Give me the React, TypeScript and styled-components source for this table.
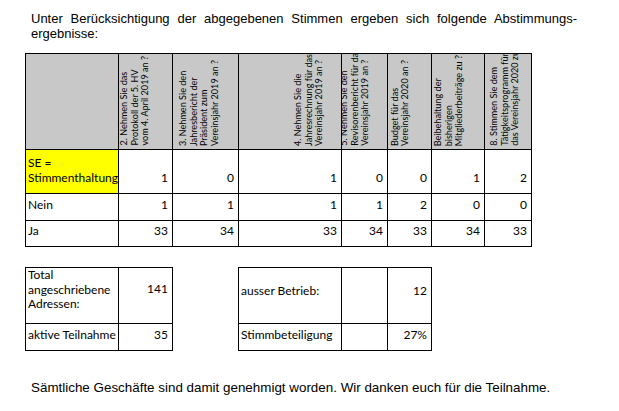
import React from "react";
import styled, { createGlobalStyle } from "styled-components";

const Global = createGlobalStyle`
  html, body { margin: 0; padding: 0; background: #ffffff; }
  body { font-family: Lato, "Open Sans", sans-serif; color: #000; }
`;

const Page = styled.div`
  width: 619px;
  height: 411px;
  box-sizing: border-box;
  padding-top: 11px;
  display: flex;
  flex-direction: column;
`;

const Para = styled.p<{ $top?: number; $size?: number }>`
  margin: ${(p) => p.$top ?? 0}px 0 0 31px;
  width: 546px;
  font-family: "Liberation Sans", Arial, sans-serif;
  font-size: ${(p) => p.$size ?? 13}px;
  line-height: 15px;
  text-align: justify;
`;

const Grid = styled.div<{ $cols: string; $rows: string; $left: number; $top: number }>`
  display: grid;
  grid-template-columns: ${(p) => p.$cols};
  grid-template-rows: ${(p) => p.$rows};
  width: fit-content;
  margin: ${(p) => p.$top}px 0 0 ${(p) => p.$left}px;
  border-left: 1px solid #000;
  border-top: 1px solid #000;
`;

const HeadCell = styled.div`
  box-sizing: border-box;
  border-right: 1px solid #000;
  border-bottom: 1px solid #000;
  background: #c8c8c8;
  overflow: hidden;
  display: flex;
  align-items: flex-end;
`;

const Rot = styled.div<{ $pad: number }>`
  writing-mode: vertical-rl;
  transform: rotate(180deg);
  margin-left: ${(p) => p.$pad}px;
  margin-bottom: 3px;
  font-size: 9.1px;
  line-height: 10.7px;
  white-space: nowrap;
  flex-shrink: 0;
`;

const Cell = styled.div<{ $num?: boolean; $hl?: boolean; $pt?: number; $pb?: number }>`
  box-sizing: border-box;
  border-right: 1px solid #000;
  border-bottom: 1px solid #000;
  background: ${(p) => (p.$hl ? "#ffff00" : "#ffffff")};
  display: flex;
  flex-direction: column;
  justify-content: ${(p) => (p.$pt !== undefined ? "flex-start" : "flex-end")};
  padding: ${(p) => p.$pt ?? 0}px ${(p) => (p.$num ? 4 : 0)}px ${(p) => p.$pb ?? 0}px ${(p) => (p.$num ? 0 : 2)}px;
  text-align: ${(p) => (p.$num ? "right" : "left")};
  font-size: 12px;
  line-height: 14.5px;
  white-space: nowrap;
`;

const Summary = styled.div`
  display: flex;
  gap: 65px;
  margin: 20px 0 0 25px;
`;

const cols = [93, 54, 66, 103, 46, 44, 53, 47];
const colStr = cols.map((c) => `${c}px`).join(" ");

const headers: { lines: string[]; pad: number }[] = [
  { lines: [], pad: 0 },
  { lines: ["2. Nehmen Sie das", "Protokoll der 5. HV", "vom 4. April 2019 an ?"], pad: 0 },
  { lines: ["3. Nehmen Sie den", "Jahresbericht der", "Präsident zum", "Vereinsjahr 2019 an ?"], pad: 5 },
  { lines: ["4. Nehmen Sie die", "Jahresrechnung für das", "Vereinsjahr 2019 an ?"], pad: 54 },
  { lines: ["5. Nehmen Sie den", "Revisorenbericht für das", "Vereinsjahr 2019 an ?"], pad: -3 },
  { lines: ["6. Nehmen Sie das", "Budget für das", "Vereinsjahr 2020 an ?"], pad: -9 },
  { lines: ["Beibehaltung der", "bisherigen", "Mitgliederbeiträge zu ?"], pad: 1 },
  { lines: ["8. Stimmen Sie dem", "Tätigkeitsprogramm für", "das Vereinsjahr 2020 zu?"], pad: 4 },
];

const rows: { label: string[]; values: string[]; hl?: boolean }[] = [
  { label: ["SE =", "Stimmenthaltung"], values: ["1", "0", "1", "0", "0", "1", "2"], hl: true },
  { label: ["Nein"], values: ["1", "1", "1", "1", "2", "0", "0"] },
  { label: ["Ja"], values: ["33", "34", "33", "34", "33", "34", "33"] },
];

export default function App() {
  return (
    <Page>
      <Global />
      <Para>
        Unter Berücksichtigung der abgegebenen Stimmen ergeben sich folgende Abstimmungs-
        ergebnisse:
      </Para>

      <Grid $cols={colStr} $rows="96px 44px 27px 26px" $left={25} $top={12}>
        {headers.map((h, i) => (
          <HeadCell key={`h${i}`}>
            {h.lines.length > 0 && (
              <Rot $pad={h.pad}>
                {h.lines.map((l, j) => (
                  <div key={j}>{l}</div>
                ))}
              </Rot>
            )}
          </HeadCell>
        ))}
        {rows.map((r, i) => (
          <React.Fragment key={`r${i}`}>
            <Cell $hl={r.hl} $pb={8}>
              {r.label.map((l, j) => (
                <div key={j}>{l}</div>
              ))}
            </Cell>
            {r.values.map((v, j) => (
              <Cell key={j} $num $pb={8}>
                {v}
              </Cell>
            ))}
          </React.Fragment>
        ))}
      </Grid>

      <Summary>
        <Grid $cols="93px 54px" $rows="56px 27px" $left={0} $top={0}>
          <Cell $pt={0}>
            <div>Total</div>
            <div>angeschriebene</div>
            <div>Adressen:</div>
          </Cell>
          <Cell $num $pt={14}>141</Cell>
          <Cell $pt={4}>aktive Teilnahme</Cell>
          <Cell $num $pt={4}>35</Cell>
        </Grid>
        <Grid $cols="103px 46px 44px" $rows="56px 27px" $left={0} $top={0}>
          <Cell $pt={16}>ausser Betrieb:</Cell>
          <Cell $pt={16} />
          <Cell $num $pt={16}>12</Cell>
          <Cell $pt={4}>Stimmbeteiligung</Cell>
          <Cell $pt={4} />
          <Cell $num $pt={4}>27%</Cell>
        </Grid>
      </Summary>

      <Para $top={29} $size={13.4}>
        Sämtliche Geschäfte sind damit genehmigt worden. Wir danken euch für die Teilnahme.
      </Para>
    </Page>
  );
}
